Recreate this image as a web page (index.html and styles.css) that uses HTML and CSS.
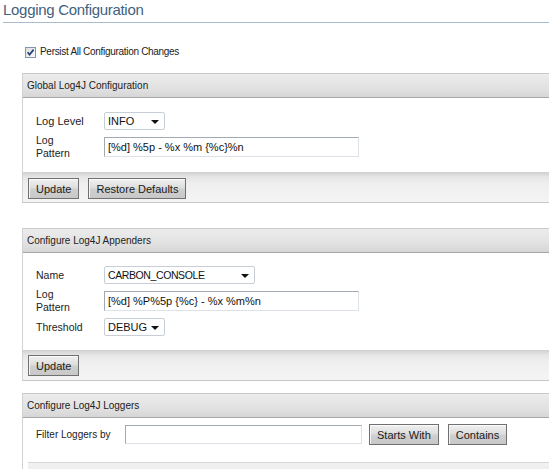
FILE: index.html
```html
<!DOCTYPE html>
<html>
<head>
<meta charset="utf-8">
<link rel="stylesheet" href="styles.css">
</head>
<body>
<div class="page">
  <h1 class="title">Logging Configuration</h1>
  <label class="persist">
    <span class="cb"><svg width="11" height="11" viewBox="0 0 11 11"><defs><linearGradient id="g" x1="0" y1="0" x2="1" y2="1"><stop offset="0" stop-color="#dcdcdc"/><stop offset="1" stop-color="#fbfbfb"/></linearGradient></defs><rect x="0.5" y="0.5" width="10" height="10" fill="url(#g)" stroke="#8494ab"/><path d="M2.6 5.2 L4.6 7.6 L8.6 2.6" fill="none" stroke="#25407c" stroke-width="1.7"/></svg></span>
    <span class="persist-text">Persist All Configuration Changes</span>
  </label>

  <section class="panel p1">
    <div class="phead">Global Log4J Configuration</div>
    <div class="pbody">
      <div class="form">
        <div class="lbl lbl-lg">Log Level</div>
        <div class="sel sel-s"><span>INFO</span><i class="arr"></i></div>
        <div class="lbl two">Log<br>Pattern</div>
        <div class="inp inp-l">[%d] %5p - %x %m {%c}%n</div>
      </div>
    </div>
    <div class="pfoot"><button class="btn">Update</button><button class="btn">Restore Defaults</button></div>
  </section>

  <section class="panel p2">
    <div class="phead">Configure Log4J Appenders</div>
    <div class="pbody">
      <div class="form">
        <div class="lbl">Name</div>
        <div class="sel sel-m"><span class="caps">CARBON_CONSOLE</span><i class="arr"></i></div>
        <div class="lbl two">Log<br>Pattern</div>
        <div class="inp inp-l">[%d] %P%5p {%c} - %x %m%n</div>
        <div class="lbl">Threshold</div>
        <div class="sel sel-s"><span>DEBUG</span><i class="arr"></i></div>
      </div>
    </div>
    <div class="pfoot"><button class="btn">Update</button></div>
  </section>

  <section class="panel p3">
    <div class="phead">Configure Log4J Loggers</div>
    <div class="pbody filter-body">
      <div class="filter">
        <span class="lbl filter-lbl">Filter Loggers by</span>
        <div class="inp inp-f"></div>
        <button class="btn">Starts With</button>
        <button class="btn">Contains</button>
      </div>
      <div class="inner"></div>
    </div>
  </section>
</div>
</body>
</html>
```
FILE: styles.css
```css
html, body {
  margin: 0;
  padding: 0;
  background: #ffffff;
  overflow: hidden;
}
body {
  font-family: "Liberation Sans", Arial, sans-serif;
  font-size: 10.5px;
  color: #222222;
  width: 549px;
  height: 469px;
}
.page {
  display: flex;
  flex-direction: column;
}
.title {
  margin: 0 0 0 3px;
  padding: 1px 0 4px 0;
  font-size: 15px;
  line-height: 17px;
  font-weight: normal;
  letter-spacing: -0.3px;
  color: #3f5f7e;
  border-bottom: 1px solid #a9bccd;
}
.persist {
  display: flex;
  align-items: center;
  margin: 23px 0 0 25px;
  height: 12px;
  gap: 4px;
}
.cb {
  display: flex;
  width: 11px;
  height: 11px;
}
.persist-text {
  font-size: 10px;
  letter-spacing: -0.3px;
  line-height: 12px;
  color: #222;
}
.panel {
  margin-left: 22px;
  border-left: 1px solid #d2d2d2;
  display: flex;
  flex-direction: column;
}
.p1 { margin-top: 15px; }
.p2 { margin-top: 25px; }
.p3 { margin-top: 12px; }
.phead {
  height: 23px;
  line-height: 23px;
  padding-left: 4px;
  font-size: 10px;
  color: #222;
  border-top: 1px solid #c9c9c9;
  border-bottom: 1px solid #a6a6a6;
  background: linear-gradient(#ececec, #e2e2e2 60%, #d6d6d6);
}
.pbody {
  background: #fff;
}
.p1 .pbody { padding: 14px 0 12px 13px; }
.p2 .pbody { padding: 13px 0 14px 13px; }
.form {
  display: grid;
  grid-template-columns: 68px auto;
  row-gap: 4px;
  align-items: center;
  justify-items: start;
}
.lbl {
  font-size: 10.5px;
  line-height: 13px;
  color: #222;
}
.lbl-lg { font-size: 11px; }
.two { line-height: 13px; }
.sel {
  box-sizing: border-box;
  height: 18px;
  border: 1px solid #c8ced6;
  border-radius: 2px;
  background: #fff;
  display: flex;
  align-items: center;
  justify-content: space-between;
  padding: 0 5px 0 3px;
  font-size: 11px;
  color: #111;
}
.sel-s { width: 61px; }
.sel-m { width: 151px; }
.caps { font-size: 10.5px; letter-spacing: -0.4px; }
.arr {
  width: 0;
  height: 0;
  border-left: 4px solid transparent;
  border-right: 4px solid transparent;
  border-top: 4px solid #111;
  margin-top: 2px;
}
.inp {
  box-sizing: border-box;
  height: 20px;
  border: 1px solid;
  border-color: #a3a9b1 #dde2e9 #dde2e9 #a3a9b1;
  background: #fff;
  padding: 0 3px;
  line-height: 18px;
  font-size: 11px;
  color: #111;
  white-space: nowrap;
}
.inp-l { width: 255px; }
.inp-f { width: 237px; height: 19px; margin-right: 7px; }
.pfoot {
  display: flex;
  gap: 9px;
  padding: 5px 0 4px 5px;
  border-bottom: 1px solid #c6c6c6;
  background: linear-gradient(#cfcfcf, #e6e6e6 5px, #efefef 12px, #f4f4f4);
}
.p1 .pfoot { padding-top: 6px; padding-bottom: 3px; }
.btn {
  box-sizing: border-box;
  height: 21px;
  padding: 0 7px;
  margin: 0;
  font-family: "Liberation Sans", Arial, sans-serif;
  font-size: 11px;
  color: #1a1a1a;
  border: 1px solid #707070;
  border-radius: 0;
  background: linear-gradient(#f0f0f0, #dedede 45%, #cfcfcf 55%, #c8c8c8);
  box-shadow: inset 0 1px 0 #fbfbfb, inset 1px 0 0 #f4f4f4;
}
.filter-body {
  padding: 6px 0 0 0;
  display: flex;
  flex-direction: column;
}
.filter {
  display: flex;
  align-items: center;
  padding-left: 13px;
  height: 21px;
}
.filter-lbl {
  width: 89px;
  flex: none;
  font-size: 10px;
}
.filter .btn + .btn { margin-left: 9px; }
.inner {
  margin: 17px 0 0 5px;
  height: 20px;
  border-top: 1px solid #d6d6d6;
  background: linear-gradient(#f2f2f2, #e6e6e6);
}
```
